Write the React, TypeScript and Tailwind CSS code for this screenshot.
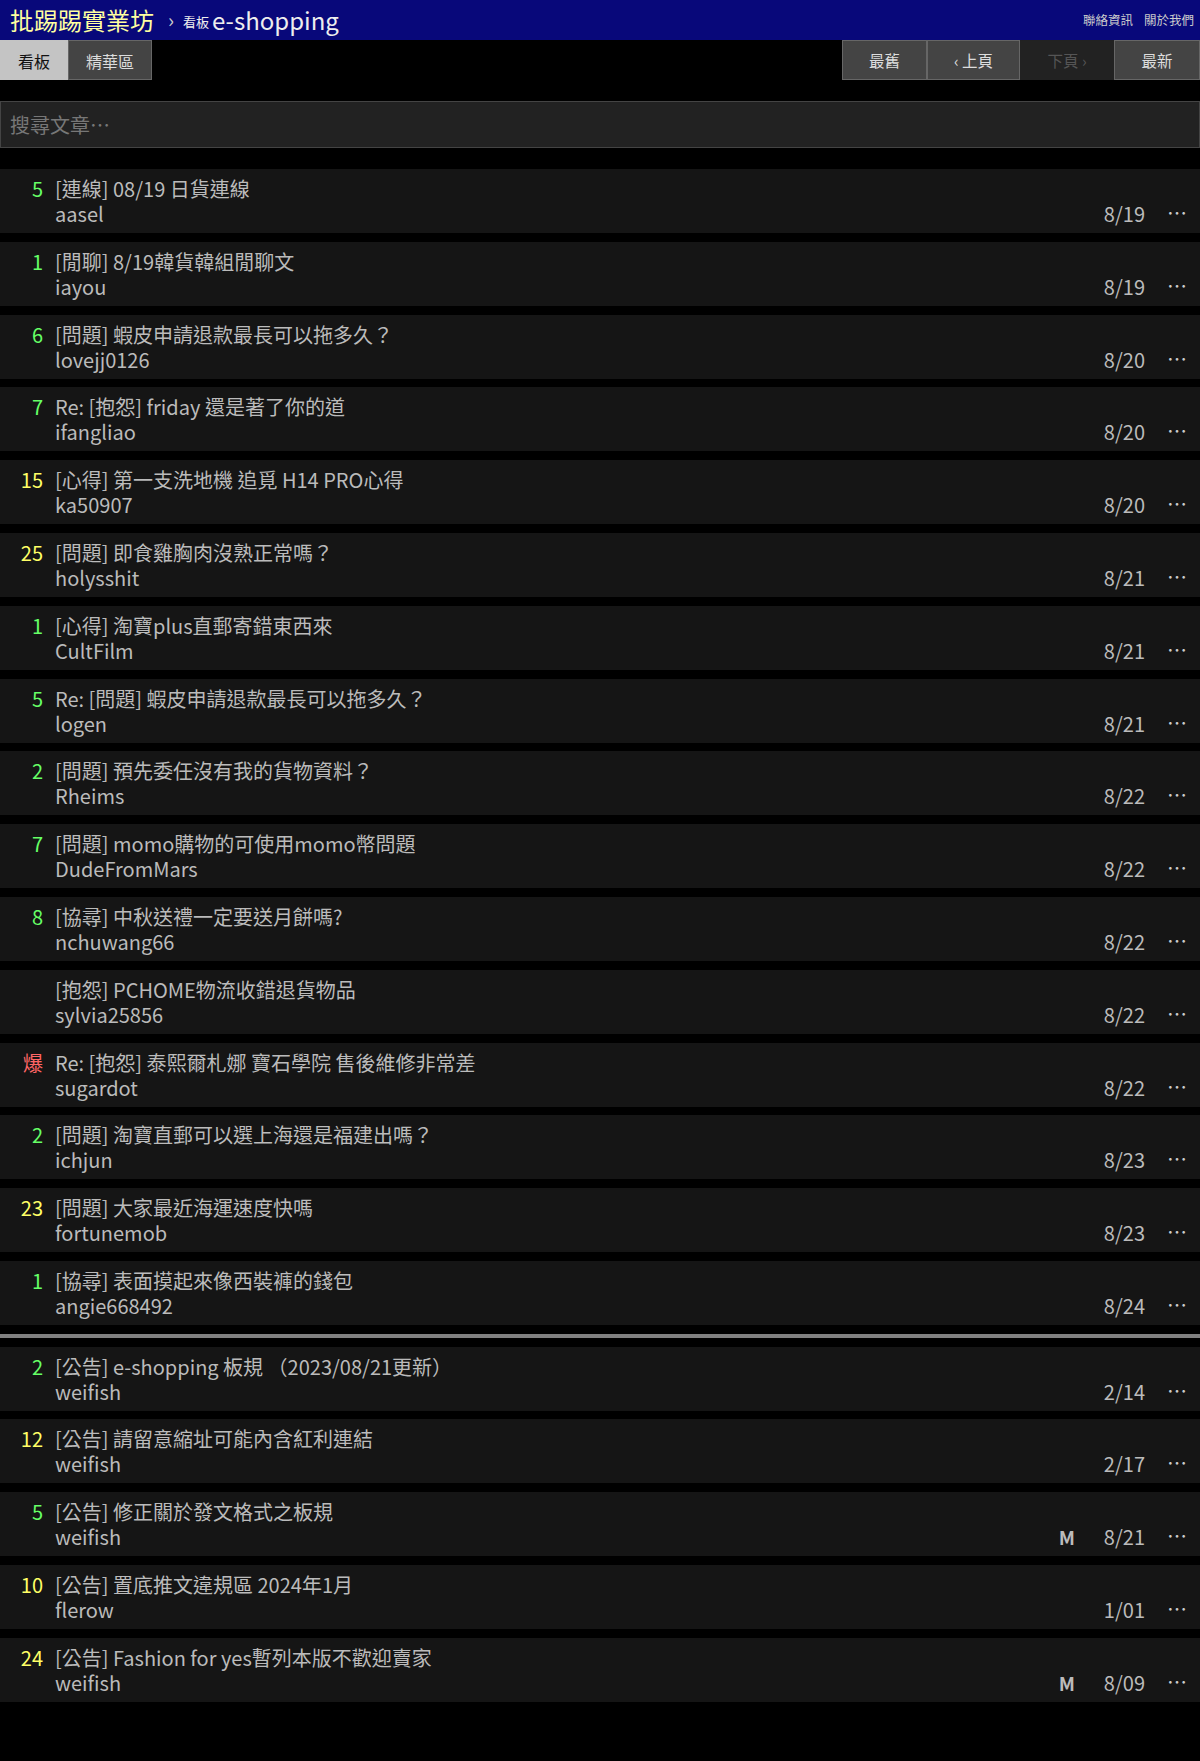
type Post = {
  n: string
  title: string
  author: string
  date: string
  mark?: boolean
}

const posts: Post[] = [
  { n: "5", title: "[連線] 08/19 日貨連線", author: "aasel", date: "8/19" },
  { n: "1", title: "[閒聊] 8/19韓貨韓組閒聊文", author: "iayou", date: "8/19" },
  { n: "6", title: "[問題] 蝦皮申請退款最長可以拖多久？", author: "lovejj0126", date: "8/20" },
  { n: "7", title: "Re: [抱怨] friday 還是著了你的道", author: "ifangliao", date: "8/20" },
  { n: "15", title: "[心得] 第一支洗地機 追覓 H14 PRO心得", author: "ka50907", date: "8/20" },
  { n: "25", title: "[問題] 即食雞胸肉沒熟正常嗎？", author: "holysshit", date: "8/21" },
  { n: "1", title: "[心得] 淘寶plus直郵寄錯東西來", author: "CultFilm", date: "8/21" },
  { n: "5", title: "Re: [問題] 蝦皮申請退款最長可以拖多久？", author: "logen", date: "8/21" },
  { n: "2", title: "[問題] 預先委任沒有我的貨物資料？", author: "Rheims", date: "8/22" },
  { n: "7", title: "[問題] momo購物的可使用momo幣問題", author: "DudeFromMars", date: "8/22" },
  { n: "8", title: "[協尋] 中秋送禮一定要送月餅嗎?", author: "nchuwang66", date: "8/22" },
  { n: "", title: "[抱怨] PCHOME物流收錯退貨物品", author: "sylvia25856", date: "8/22" },
  { n: "爆", title: "Re: [抱怨] 泰熙爾札娜 寶石學院 售後維修非常差", author: "sugardot", date: "8/22" },
  { n: "2", title: "[問題] 淘寶直郵可以選上海還是福建出嗎？", author: "ichjun", date: "8/23" },
  { n: "23", title: "[問題] 大家最近海運速度快嗎", author: "fortunemob", date: "8/23" },
  { n: "1", title: "[協尋] 表面摸起來像西裝褲的錢包", author: "angie668492", date: "8/24" },
]

const pinned: Post[] = [
  { n: "2", title: "[公告] e-shopping 板規 （2023/08/21更新）", author: "weifish", date: "2/14" },
  { n: "12", title: "[公告] 請留意縮址可能內含紅利連結", author: "weifish", date: "2/17" },
  { n: "5", title: "[公告] 修正關於發文格式之板規", author: "weifish", date: "8/21", mark: true },
  { n: "10", title: "[公告] 置底推文違規區 2024年1月", author: "flerow", date: "1/01" },
  { n: "24", title: "[公告] Fashion for yes暫列本版不歡迎賣家", author: "weifish", date: "8/09", mark: true },
]

function countColor(n: string) {
  if (n === "爆") return "text-[#f66]"
  if (n.length >= 2) return "text-[#ff6]"
  return "text-[#6f6]"
}

function PostRow({ post }: { post: Post }) {
  return (
    <div className="flex h-[64px] bg-[#151515] pt-[7px] text-[20px] leading-[25px] text-[#bbb]">
      <div className={`w-[43px] shrink-0 text-right ${countColor(post.n)}`}>{post.n}</div>
      <div className="ml-[12px] flex min-w-0 flex-1 flex-col">
        <div className="whitespace-nowrap">{post.title}</div>
        <div className="flex items-center">
          <div className="flex-1 whitespace-nowrap">{post.author}</div>
          <div className="w-[30px] pr-[10px] text-right text-[19px] font-bold">{post.mark ? "M" : ""}</div>
          <div className="w-[60px] text-right">{post.date}</div>
          <div className="-mt-[1px] w-[55px] pl-[22px] text-[20px] leading-[20px] text-[#ccc]">⋯</div>
        </div>
      </div>
    </div>
  )
}

function NavButton({ label, width, disabled }: { label: string; width: string; disabled?: boolean }) {
  return (
    <div
      className={`flex h-[40px] items-center justify-center pt-[2px] text-[15.5px] ${width} ${
        disabled ? "bg-[#222] text-[#555]" : "border border-[#666] bg-[#444] text-[#ddd]"
      }`}
    >
      {label}
    </div>
  )
}

export default function App() {
  return (
    <div
      className="min-h-screen bg-black"
      style={{ fontFamily: '"Noto Sans CJK TC", "Noto Sans", sans-serif' }}
    >
      <div className="flex h-[40px] items-center justify-between bg-[#08087a] pl-[10px] pr-[6px]">
        <div className="flex items-center">
          <span className="text-[24px] leading-none text-[#ffffa0]">批踢踢實業坊</span>
          <span className="ml-[14px] text-[20px] leading-none text-[#ccc]">›</span>
          <span className="ml-[9px] mt-[4px] text-[13px] text-[#eee]">看板</span>
          <span className="ml-[3px] text-[24px] leading-none text-[#eee]">e-shopping</span>
        </div>
        <div className="flex gap-[11px] text-[12.5px] text-[#ccc]">
          <span>聯絡資訊</span>
          <span>關於我們</span>
        </div>
      </div>

      <div className="flex h-[40px] justify-between">
        <div className="flex">
          <div className="flex w-[68px] items-center justify-center bg-[#c4c4c4] pt-[2px] text-[16px] text-[#111]">看板</div>
          <div className="flex w-[84px] items-center justify-center border border-[#666] bg-[#444] pt-[2px] text-[16px] text-[#ddd]">
            精華區
          </div>
        </div>
        <div className="flex">
          <NavButton label="最舊" width="w-[85px]" />
          <NavButton label="‹ 上頁" width="w-[93px]" />
          <NavButton label="下頁 ›" width="w-[94px]" disabled />
          <NavButton label="最新" width="w-[86px]" />
        </div>
      </div>

      <div className="mt-[21px] flex h-[47px] items-center border border-[#444] bg-[#222] pl-[9px] text-[20px] text-[#777]">
        搜尋文章⋯
      </div>

      <div className="mt-[21px] flex flex-col gap-[8.8px] pb-[59px]">
        {posts.map((p, i) => (
          <PostRow key={i} post={p} />
        ))}
        <div className="h-[4px] bg-[#808080]" />
        {pinned.map((p, i) => (
          <PostRow key={`p${i}`} post={p} />
        ))}
      </div>
    </div>
  )
}
